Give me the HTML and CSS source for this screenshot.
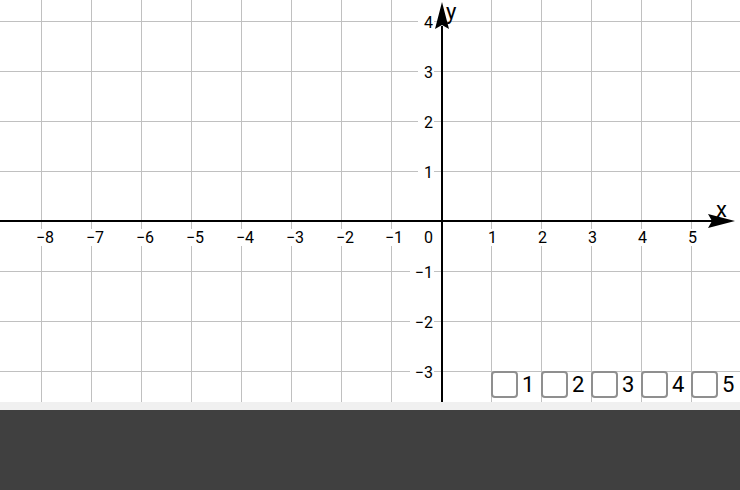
FILE: index.html
```html
<!DOCTYPE html>
<html>
<head>
<meta charset="utf-8">
<link rel="stylesheet" href="styles.css">
</head>
<body>
<div class="app">
  <div class="canvas">
    <svg class="graph" width="740" height="402" viewBox="0 0 740 402" xmlns="http://www.w3.org/2000/svg">
      <g class="grid">
        <line x1="41.5" y1="0" x2="41.5" y2="402"/>
        <line x1="91.5" y1="0" x2="91.5" y2="402"/>
        <line x1="141.5" y1="0" x2="141.5" y2="402"/>
        <line x1="191.5" y1="0" x2="191.5" y2="402"/>
        <line x1="241.5" y1="0" x2="241.5" y2="402"/>
        <line x1="291.5" y1="0" x2="291.5" y2="402"/>
        <line x1="341.5" y1="0" x2="341.5" y2="402"/>
        <line x1="391.5" y1="0" x2="391.5" y2="402"/>
        <line x1="491.5" y1="0" x2="491.5" y2="402"/>
        <line x1="541.5" y1="0" x2="541.5" y2="402"/>
        <line x1="591.5" y1="0" x2="591.5" y2="402"/>
        <line x1="641.5" y1="0" x2="641.5" y2="402"/>
        <line x1="691.5" y1="0" x2="691.5" y2="402"/>
        <line x1="0" y1="21.5" x2="740" y2="21.5"/>
        <line x1="0" y1="71.5" x2="740" y2="71.5"/>
        <line x1="0" y1="121.5" x2="740" y2="121.5"/>
        <line x1="0" y1="171.5" x2="740" y2="171.5"/>
        <line x1="0" y1="271.5" x2="740" y2="271.5"/>
        <line x1="0" y1="321.5" x2="740" y2="321.5"/>
        <line x1="0" y1="371.5" x2="740" y2="371.5"/>
      </g>
      <g class="labelbg">
        <rect x="418" y="12" width="16" height="18"/>
        <rect x="418" y="62" width="16" height="18"/>
        <rect x="418" y="112" width="16" height="18"/>
        <rect x="418" y="162" width="16" height="18"/>
        <rect x="410" y="262" width="24" height="18"/>
        <rect x="410" y="312" width="24" height="18"/>
        <rect x="410" y="362" width="24" height="18"/>
        <rect x="34" y="229" width="22" height="17"/>
        <rect x="84" y="229" width="22" height="17"/>
        <rect x="134" y="229" width="22" height="17"/>
        <rect x="184" y="229" width="22" height="17"/>
        <rect x="234" y="229" width="22" height="17"/>
        <rect x="284" y="229" width="22" height="17"/>
        <rect x="334" y="229" width="22" height="17"/>
        <rect x="383" y="229" width="21" height="17"/>
        <rect x="487" y="229" width="11" height="17"/>
        <rect x="537" y="229" width="11" height="17"/>
        <rect x="587" y="229" width="11" height="17"/>
        <rect x="637" y="229" width="11" height="17"/>
        <rect x="687" y="229" width="11" height="17"/>
      </g>
      <g class="axes">
        <line x1="0" y1="221" x2="712" y2="221"/>
        <line x1="442" y1="26" x2="442" y2="402"/>
      </g>
      <path class="arrow" d="M735 221 L708 214 L712 221 L708 228 Z"/>
      <path class="arrow" d="M442 2 L435 29 L442 25 L449 29 Z"/>
      <g class="xlabels">
        <text x="45" y="243">−8</text>
        <text x="95" y="243">−7</text>
        <text x="145" y="243">−6</text>
        <text x="195" y="243">−5</text>
        <text x="245" y="243">−4</text>
        <text x="295" y="243">−3</text>
        <text x="345" y="243">−2</text>
        <text x="394" y="243">−1</text>
        <text x="492.5" y="243">1</text>
        <text x="542.5" y="243">2</text>
        <text x="592.5" y="243">3</text>
        <text x="642.5" y="243">4</text>
        <text x="692.5" y="243">5</text>
      </g>
      <g class="ylabels">
        <text x="433" y="243">0</text>
        <text x="433" y="28">4</text>
        <text x="433" y="78">3</text>
        <text x="433" y="128">2</text>
        <text x="433" y="178">1</text>
        <text x="433" y="278">−1</text>
        <text x="433" y="328">−2</text>
        <text x="433" y="378">−3</text>
      </g>
      <text class="axisname" x="716" y="217">x</text>
      <text class="axisname" x="446" y="19">y</text>
    </svg>
    <div class="checks">
      <label class="check"><span class="box"></span><span class="num">1</span></label>
      <label class="check"><span class="box"></span><span class="num">2</span></label>
      <label class="check"><span class="box"></span><span class="num">3</span></label>
      <label class="check"><span class="box"></span><span class="num">4</span></label>
      <label class="check"><span class="box"></span><span class="num">5</span></label>
    </div>
  </div>
  <div class="band"></div>
  <div class="toolbar"></div>
</div>
</body>
</html>
```
FILE: styles.css
```css
html, body {
  margin: 0;
  padding: 0;
  background: #ffffff;
}
.app {
  width: 740px;
  height: 490px;
  display: flex;
  flex-direction: column;
  overflow: hidden;
  font-family: Roboto, "Liberation Sans", sans-serif;
}
.canvas {
  position: relative;
  width: 740px;
  height: 402px;
  background: #ffffff;
  flex: none;
}
.graph {
  display: block;
}
.grid line {
  stroke: #c0c0c0;
  stroke-width: 1;
}
.labelbg rect {
  fill: #ffffff;
}
.axes line {
  stroke: #000000;
  stroke-width: 2;
}
.arrow {
  fill: #000000;
}
.xlabels text {
  font-family: Roboto, "Liberation Sans", sans-serif;
  font-size: 16px;
  text-anchor: middle;
  fill: #000000;
}
.ylabels text {
  font-family: Roboto, "Liberation Sans", sans-serif;
  font-size: 16px;
  text-anchor: end;
  fill: #000000;
}
.axisname {
  font-family: Roboto, "Liberation Sans", sans-serif;
  font-size: 22px;
  fill: #000000;
}
.checks {
  position: absolute;
  left: 491px;
  top: 371px;
  display: flex;
}
.check {
  width: 50px;
  display: flex;
  align-items: center;
  gap: 4px;
}
.box {
  width: 23px;
  height: 23px;
  border: 2px solid #8f8f8f;
  border-radius: 4px;
  background: #ffffff;
  flex: none;
}
.num {
  font-size: 22px;
  line-height: 27px;
  color: #000000;
}
.band {
  height: 8px;
  background: #f0f0f0;
  flex: none;
}
.toolbar {
  flex: 1;
  background: #404040;
}
```
